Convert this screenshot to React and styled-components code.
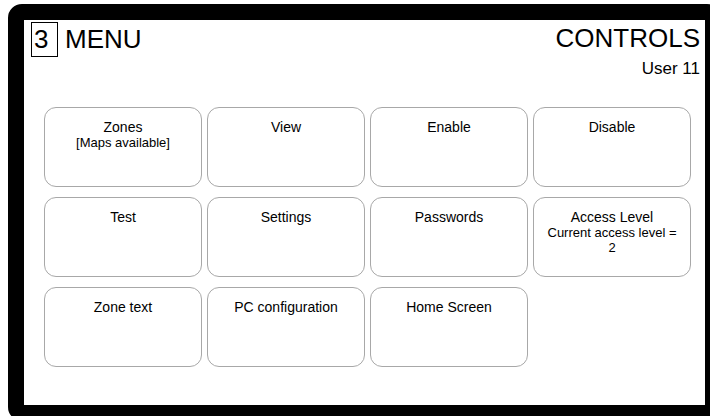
import React from 'react'
import styled, { createGlobalStyle } from 'styled-components'

const GlobalStyle = createGlobalStyle`
	html, body {
		margin: 0;
		padding: 0;
		background: #ffffff;
		overflow: hidden;
	}
	body {
		font-family: 'Liberation Sans', Arial, sans-serif;
		color: #000000;
	}
`

const Viewport = styled.div`
	width: 710px;
	height: 416px;
	overflow: hidden;
	background: #ffffff;
`

const Frame = styled.div`
	margin: 4px 0 0 8px;
	width: 681px;
	height: 385px;
	border: 16px solid #000000;
	border-radius: 14px;
	background: #ffffff;
`

const Screen = styled.div`
	width: 100%;
	height: 100%;
	background: #ffffff;
	border-radius: 2px;
	display: flex;
	flex-direction: column;
`

const Header = styled.header`
	display: flex;
	justify-content: space-between;
	align-items: flex-start;
	padding: 2px 5px 0 7px;
`

const TitleGroup = styled.div`
	display: flex;
	align-items: baseline;
	font-size: 26px;
	line-height: 33px;
`

const LevelBox = styled.span`
	display: inline-block;
	width: 23px;
	padding-left: 2px;
	border: 1px solid #000000;
`

const MenuTitle = styled.span`
	margin-left: 7px;
`

const Status = styled.div`
	display: flex;
	flex-direction: column;
	align-items: flex-end;
	padding-top: 1px;
`

const Controls = styled.div`
	font-size: 26px;
	line-height: 30px;
`

const UserName = styled.div`
	margin-top: 6px;
	font-size: 17px;
	line-height: 20px;
`

const Grid = styled.div`
	display: grid;
	grid-template-columns: repeat(4, 158px);
	grid-auto-rows: 80px;
	column-gap: 5px;
	row-gap: 10px;
	margin-top: 28px;
	padding-left: 20px;
`

const MenuButton = styled.button`
	display: flex;
	flex-direction: column;
	align-items: center;
	justify-content: flex-start;
	padding: 12px 12px 0;
	border: 1px solid #a8a8a8;
	border-radius: 12px;
	background: #ffffff;
	color: #000000;
	font-family: 'Liberation Sans', Arial, sans-serif;
	text-align: center;
	cursor: pointer;
`

const Label = styled.span`
	font-size: 14px;
	line-height: 15px;
`

const SubLabel = styled.span`
	font-size: 13px;
	line-height: 15px;
`

const items = [
	{ label: 'Zones', sub: '[Maps available]' },
	{ label: 'View' },
	{ label: 'Enable' },
	{ label: 'Disable' },
	{ label: 'Test' },
	{ label: 'Settings' },
	{ label: 'Passwords' },
	{ label: 'Access Level', sub: 'Current access level = 2' },
	{ label: 'Zone text' },
	{ label: 'PC configuration' },
	{ label: 'Home Screen' },
]

const App = () => {
	return (
		<>
			<GlobalStyle />
			<Viewport>
				<Frame>
					<Screen>
						<Header>
							<TitleGroup>
								<LevelBox>3</LevelBox>
								<MenuTitle>MENU</MenuTitle>
							</TitleGroup>
							<Status>
								<Controls>CONTROLS</Controls>
								<UserName>User 11</UserName>
							</Status>
						</Header>
						<Grid>
							{items.map(item => (
								<MenuButton key={item.label}>
									<Label>{item.label}</Label>
									{item.sub && <SubLabel>{item.sub}</SubLabel>}
								</MenuButton>
							))}
						</Grid>
					</Screen>
				</Frame>
			</Viewport>
		</>
	)
}

export default App
